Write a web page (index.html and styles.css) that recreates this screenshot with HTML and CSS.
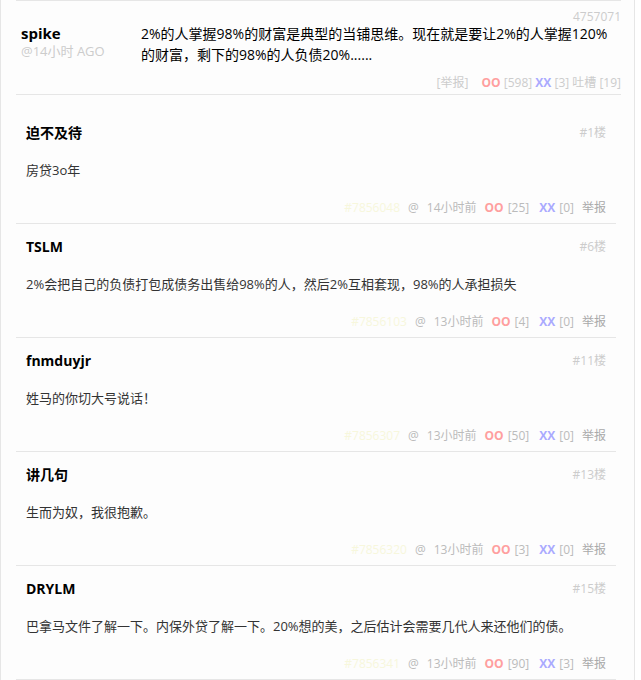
FILE: index.html
```html
<!DOCTYPE html>
<html lang="zh-CN">
<head>
<meta charset="utf-8">
<title>评论</title>
<link rel="stylesheet" href="styles.css">
</head>
<body>
<div class="wrap">
  <div class="post">
    <div class="post-id">4757071</div>
    <div class="post-body">
      <div class="author">
        <div class="author-name">spike</div>
        <div class="author-time">@14小时 AGO</div>
      </div>
      <div class="post-text">2%的人掌握98%的财富是典型的当铺思维。现在就是要让2%的人掌握120%的财富，剩下的98%的人负债20%......</div>
    </div>
    <div class="post-foot">
      <span class="report">[举报]</span>
      <span class="oo">OO</span> <span>[598]</span> <span class="xx">XX</span> <span>[3]</span> <span>吐槽 [19]</span>
    </div>
  </div>

  <div class="comments">
    <div class="comment">
      <div class="c-head"><span class="c-name">迫不及待</span><span class="c-floor">#1楼</span></div>
      <div class="c-text">房贷3o年</div>
      <div class="c-foot"><span class="c-id">#7856048</span><span class="at">@</span><span class="c-time">14小时前</span><span class="oo">OO</span><span class="cnt">[25]</span><span class="xx">XX</span><span class="cnt">[0]</span><span class="c-report">举报</span></div>
    </div>
    <div class="comment">
      <div class="c-head"><span class="c-name">TSLM</span><span class="c-floor">#6楼</span></div>
      <div class="c-text">2%会把自己的负债打包成债务出售给98%的人，然后2%互相套现，98%的人承担损失</div>
      <div class="c-foot"><span class="c-id">#7856103</span><span class="at">@</span><span class="c-time">13小时前</span><span class="oo">OO</span><span class="cnt">[4]</span><span class="xx">XX</span><span class="cnt">[0]</span><span class="c-report">举报</span></div>
    </div>
    <div class="comment">
      <div class="c-head"><span class="c-name">fnmduyjr</span><span class="c-floor">#11楼</span></div>
      <div class="c-text">姓马的你切大号说话！</div>
      <div class="c-foot"><span class="c-id">#7856307</span><span class="at">@</span><span class="c-time">13小时前</span><span class="oo">OO</span><span class="cnt">[50]</span><span class="xx">XX</span><span class="cnt">[0]</span><span class="c-report">举报</span></div>
    </div>
    <div class="comment">
      <div class="c-head"><span class="c-name">讲几句</span><span class="c-floor">#13楼</span></div>
      <div class="c-text">生而为奴，我很抱歉。</div>
      <div class="c-foot"><span class="c-id">#7856320</span><span class="at">@</span><span class="c-time">13小时前</span><span class="oo">OO</span><span class="cnt">[3]</span><span class="xx">XX</span><span class="cnt">[0]</span><span class="c-report">举报</span></div>
    </div>
    <div class="comment">
      <div class="c-head"><span class="c-name">DRYLM</span><span class="c-floor">#15楼</span></div>
      <div class="c-text">巴拿马文件了解一下。内保外贷了解一下。20%想的美，之后估计会需要几代人来还他们的债。</div>
      <div class="c-foot"><span class="c-id">#7856341</span><span class="at">@</span><span class="c-time">13小时前</span><span class="oo">OO</span><span class="cnt">[90]</span><span class="xx">XX</span><span class="cnt">[3]</span><span class="c-report">举报</span></div>
    </div>
  </div>
</div>
</body>
</html>
```
FILE: styles.css
```css
html, body {
  margin: 0;
  padding: 0;
  background: #ffffff;
}
body {
  font-family: "Open Sans", "Noto Sans CJK SC", sans-serif;
  font-size: 13px;
  color: #333;
}
.wrap {
  width: 633px;
  min-height: 100vh;
  border-left: 1px solid #e6e6e6;
  border-right: 1px solid #e6e6e6;
  background: #fdfdfd;
  box-sizing: content-box;
}
.post {
  margin-left: 15px;
  width: 605px;
  border-top: 1px solid #e6e6e6;
  border-bottom: 1px solid #e6e6e6;
  padding-top: 10px;
  padding-bottom: 3px;
}
.post-id {
  text-align: right;
  font-size: 12px;
  line-height: 12px;
  height: 12px;
  color: #cccccc;
}
.post-body {
  display: flex;
}
.author {
  width: 120px;
  padding-left: 5px;
  flex: none;
}
.author-name {
  font-size: 15px;
  font-weight: 700;
  line-height: 20px;
  color: #000;
}
.author-time {
  font-size: 13px;
  line-height: 16px;
  color: #cccccc;
}
.post-text {
  width: 480px;
  font-size: 14px;
  line-height: 21px;
  color: #000;
}
.post-foot {
  margin-top: 10px;
  text-align: right;
  font-size: 12px;
  line-height: 16px;
  color: #cccccc;
}
.post-foot .report {
  margin-right: 10px;
}
.oo {
  color: #ff9f9f;
  font-weight: 700;
}
.xx {
  color: #aaaaff;
  font-weight: 700;
}
.comments {
  padding-top: 15px;
}
.comment {
  margin-left: 15px;
  width: 580px;
  padding: 13px 10px 7px 10px;
  border-bottom: 1px solid #e6e6e6;
}
.c-head {
  display: flex;
  justify-content: space-between;
  align-items: center;
  height: 20px;
}
.c-name {
  font-size: 14px;
  font-weight: 700;
  color: #000;
  line-height: 20px;
}
.c-floor {
  font-size: 12px;
  color: #cccccc;
  line-height: 20px;
}
.c-text {
  margin-top: 17px;
  font-size: 13px;
  line-height: 20px;
  color: #333;
}
.c-foot {
  margin-top: 20px;
  display: flex;
  justify-content: flex-end;
  gap: 4px;
  font-size: 12px;
  line-height: 16px;
  color: #bbbbbb;
}
.c-id {
  color: #f7f7dc;
  margin-right: 4px;
}
.at {
  margin-right: 4px;
}
.c-time {
  margin-right: 4px;
}
.c-foot .xx {
  margin-left: 6px;
}
.c-report {
  margin-left: 4px;
  color: #aaaaaa;
}
```
